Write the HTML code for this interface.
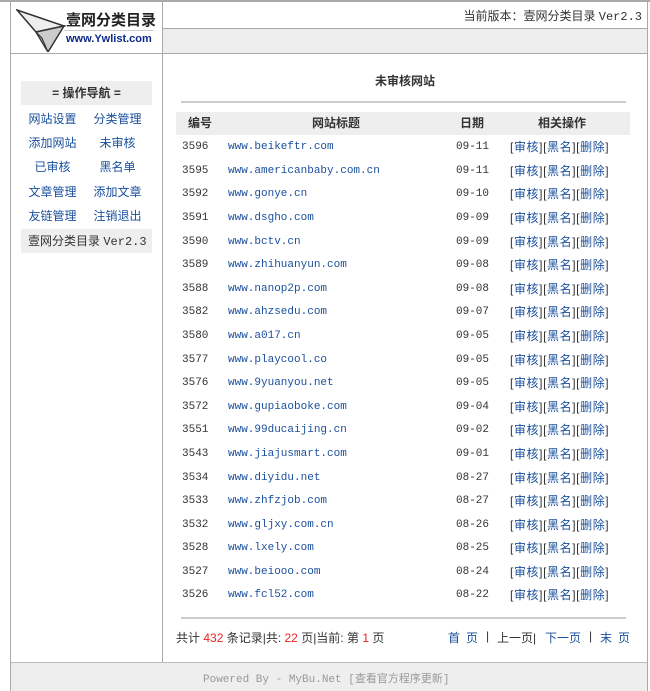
<!DOCTYPE html>
<html><head><meta charset="utf-8"><style>
*{margin:0;padding:0;box-sizing:border-box}
body{width:650px;height:691px;background:#fff;font:12px "Liberation Mono","Noto Sans CJK SC",monospace;color:#333;position:relative;overflow:hidden}
.a{position:absolute}
a{color:#1a4f9c;text-decoration:none}
.cj{font-family:"Liberation Sans","Noto Sans CJK SC",sans-serif}
.nav div{position:absolute;width:65px;text-align:center;color:#1a4f9c;font-size:12px}
.row{position:absolute;left:182px;height:16px;width:450px;font-size:11px;line-height:16px}
.row span,.row a{position:absolute;top:0;line-height:16px;white-space:nowrap}
.row .o{font-size:12px;font-family:"Liberation Sans","Noto Sans CJK SC",sans-serif;color:#333;letter-spacing:0.6px}
.row .o a{position:static}
</style></head><body>
<div class="a" style="left:0;top:0;width:650px;height:2px;background:#aaa"></div>
<div class="a" style="left:10px;top:0;width:1px;height:691px;background:#aaa"></div>
<div class="a" style="left:647px;top:0;width:1px;height:691px;background:#aaa"></div>
<div class="a" style="left:162px;top:0;width:1px;height:662px;background:#aaa"></div>
<div class="a" style="left:162px;top:28px;width:486px;height:1px;background:#aaa"></div>
<div class="a" style="left:163px;top:29px;width:484px;height:24px;background:#eee"></div>
<div class="a" style="left:10px;top:53px;width:638px;height:1px;background:#aaa"></div>
<svg class="a" style="left:16px;top:8px" width="50" height="44" viewBox="0 0 50 44"><polygon points="1,2 48,18 20,24" fill="#eee" stroke="#333" stroke-width="1.5"/><polygon points="20,24 48,18 32,44" fill="#ccc" stroke="#333" stroke-width="1.5"/><polygon points="20,24 26,30 32,44" fill="#999" stroke="#333"/></svg>
<div class="a cj" style="left:66px;top:9px;font-size:15px;font-weight:bold;color:#222">壹网分类目录</div>
<div class="a" style="left:64px;top:30px;width:90px;height:1px;background:#ccc"></div>
<div class="a" style="left:66px;top:33px;font:bold 11px 'Liberation Sans',sans-serif;color:#0a2a8a">www.Ywlist.com</div>
<div class="a cj" style="right:8px;top:7px;font-size:12px;color:#333">当前版本：壹网分类目录 <span style="font-family:'Liberation Mono',monospace">Ver2.3</span></div>
<div class="a cj" style="left:21px;top:81px;width:131px;height:24px;background:#eee;text-align:center;line-height:24px;font-weight:bold;color:#333">= 操作导航 =</div>
<div class="nav cj">
<div style="left:20px;top:110px">网站设置</div><div style="left:85px;top:110px">分类管理</div>
<div style="left:20px;top:134px">添加网站</div><div style="left:85px;top:134px">未审核</div>
<div style="left:20px;top:158px">已审核</div><div style="left:85px;top:158px">黑名单</div>
<div style="left:20px;top:183px">文章管理</div><div style="left:85px;top:183px">添加文章</div>
<div style="left:20px;top:207px">友链管理</div><div style="left:85px;top:207px">注销退出</div>
</div>
<div class="a cj" style="left:21px;top:229px;width:131px;height:24px;background:#eee;line-height:24px;padding-left:7px;color:#333">壹网分类目录 <span style="font-family:'Liberation Mono',monospace">Ver2.3</span></div>
<div class="a cj" style="left:163px;top:72px;width:484px;text-align:center;font-weight:bold">未审核网站</div>
<div class="a" style="left:181px;top:101px;width:445px;height:2px;background:#ccc"></div>
<div class="a cj" style="left:176px;top:112px;width:454px;height:23px;background:#eee;font-weight:bold;line-height:23px">
<span class="a" style="left:12px">编号</span><span class="a" style="left:136px">网站标题</span><span class="a" style="left:284px">日期</span><span class="a" style="left:362px">相关操作</span></div>
<div style="position:absolute;left:0;top:0">
<div class="row" style="top:139px"><span>3596</span><a style="left:46px">www.beikeftr.com</a><span style="left:274px">09-11</span><span class="o" style="left:328px">[<a>审核</a>][<a>黑名</a>][<a>删除</a>]</span></div>
<div class="row" style="top:163px"><span>3595</span><a style="left:46px">www.americanbaby.com.cn</a><span style="left:274px">09-11</span><span class="o" style="left:328px">[<a>审核</a>][<a>黑名</a>][<a>删除</a>]</span></div>
<div class="row" style="top:186px"><span>3592</span><a style="left:46px">www.gonye.cn</a><span style="left:274px">09-10</span><span class="o" style="left:328px">[<a>审核</a>][<a>黑名</a>][<a>删除</a>]</span></div>
<div class="row" style="top:210px"><span>3591</span><a style="left:46px">www.dsgho.com</a><span style="left:274px">09-09</span><span class="o" style="left:328px">[<a>审核</a>][<a>黑名</a>][<a>删除</a>]</span></div>
<div class="row" style="top:234px"><span>3590</span><a style="left:46px">www.bctv.cn</a><span style="left:274px">09-09</span><span class="o" style="left:328px">[<a>审核</a>][<a>黑名</a>][<a>删除</a>]</span></div>
<div class="row" style="top:257px"><span>3589</span><a style="left:46px">www.zhihuanyun.com</a><span style="left:274px">09-08</span><span class="o" style="left:328px">[<a>审核</a>][<a>黑名</a>][<a>删除</a>]</span></div>
<div class="row" style="top:281px"><span>3588</span><a style="left:46px">www.nanop2p.com</a><span style="left:274px">09-08</span><span class="o" style="left:328px">[<a>审核</a>][<a>黑名</a>][<a>删除</a>]</span></div>
<div class="row" style="top:304px"><span>3582</span><a style="left:46px">www.ahzsedu.com</a><span style="left:274px">09-07</span><span class="o" style="left:328px">[<a>审核</a>][<a>黑名</a>][<a>删除</a>]</span></div>
<div class="row" style="top:328px"><span>3580</span><a style="left:46px">www.a017.cn</a><span style="left:274px">09-05</span><span class="o" style="left:328px">[<a>审核</a>][<a>黑名</a>][<a>删除</a>]</span></div>
<div class="row" style="top:352px"><span>3577</span><a style="left:46px">www.playcool.co</a><span style="left:274px">09-05</span><span class="o" style="left:328px">[<a>审核</a>][<a>黑名</a>][<a>删除</a>]</span></div>
<div class="row" style="top:375px"><span>3576</span><a style="left:46px">www.9yuanyou.net</a><span style="left:274px">09-05</span><span class="o" style="left:328px">[<a>审核</a>][<a>黑名</a>][<a>删除</a>]</span></div>
<div class="row" style="top:399px"><span>3572</span><a style="left:46px">www.gupiaoboke.com</a><span style="left:274px">09-04</span><span class="o" style="left:328px">[<a>审核</a>][<a>黑名</a>][<a>删除</a>]</span></div>
<div class="row" style="top:422px"><span>3551</span><a style="left:46px">www.99ducaijing.cn</a><span style="left:274px">09-02</span><span class="o" style="left:328px">[<a>审核</a>][<a>黑名</a>][<a>删除</a>]</span></div>
<div class="row" style="top:446px"><span>3543</span><a style="left:46px">www.jiajusmart.com</a><span style="left:274px">09-01</span><span class="o" style="left:328px">[<a>审核</a>][<a>黑名</a>][<a>删除</a>]</span></div>
<div class="row" style="top:470px"><span>3534</span><a style="left:46px">www.diyidu.net</a><span style="left:274px">08-27</span><span class="o" style="left:328px">[<a>审核</a>][<a>黑名</a>][<a>删除</a>]</span></div>
<div class="row" style="top:493px"><span>3533</span><a style="left:46px">www.zhfzjob.com</a><span style="left:274px">08-27</span><span class="o" style="left:328px">[<a>审核</a>][<a>黑名</a>][<a>删除</a>]</span></div>
<div class="row" style="top:517px"><span>3532</span><a style="left:46px">www.gljxy.com.cn</a><span style="left:274px">08-26</span><span class="o" style="left:328px">[<a>审核</a>][<a>黑名</a>][<a>删除</a>]</span></div>
<div class="row" style="top:540px"><span>3528</span><a style="left:46px">www.lxely.com</a><span style="left:274px">08-25</span><span class="o" style="left:328px">[<a>审核</a>][<a>黑名</a>][<a>删除</a>]</span></div>
<div class="row" style="top:564px"><span>3527</span><a style="left:46px">www.beiooo.com</a><span style="left:274px">08-24</span><span class="o" style="left:328px">[<a>审核</a>][<a>黑名</a>][<a>删除</a>]</span></div>
<div class="row" style="top:587px"><span>3526</span><a style="left:46px">www.fcl52.com</a><span style="left:274px">08-22</span><span class="o" style="left:328px">[<a>审核</a>][<a>黑名</a>][<a>删除</a>]</span></div>
</div>
<div class="a" style="left:181px;top:617px;width:445px;height:2px;background:#ccc"></div>
<div class="a cj" style="left:176px;top:629px;font-size:12px">共计 <span style="color:#e22">432</span> 条记录|共: <span style="color:#e22">22</span> 页|当前: 第 <span style="color:#e22">1</span> 页</div>
<div class="a cj" style="left:448px;top:629px;font-size:12px;white-space:nowrap"><a style="letter-spacing:6px">首页</a></div>
<div class="a cj" style="left:486px;top:629px;font-size:12px">|</div>
<div class="a cj" style="left:497px;top:629px;font-size:12px">上一页|</div>
<div class="a cj" style="left:545px;top:629px;font-size:12px"><a>下一页</a></div>
<div class="a cj" style="left:589px;top:629px;font-size:12px">|</div>
<div class="a cj" style="left:600px;top:629px;font-size:12px"><a style="letter-spacing:6px">末页</a></div>
<div class="a" style="left:11px;top:662px;width:636px;height:1px;background:#bbb"></div>
<div class="a" style="left:11px;top:663px;width:636px;height:28px;background:#eee"></div>
<div class="a" style="left:203px;top:670px;font-size:11px;color:#999">Powered By - MyBu.Net [查看官方程序更新]</div>
</body></html>
